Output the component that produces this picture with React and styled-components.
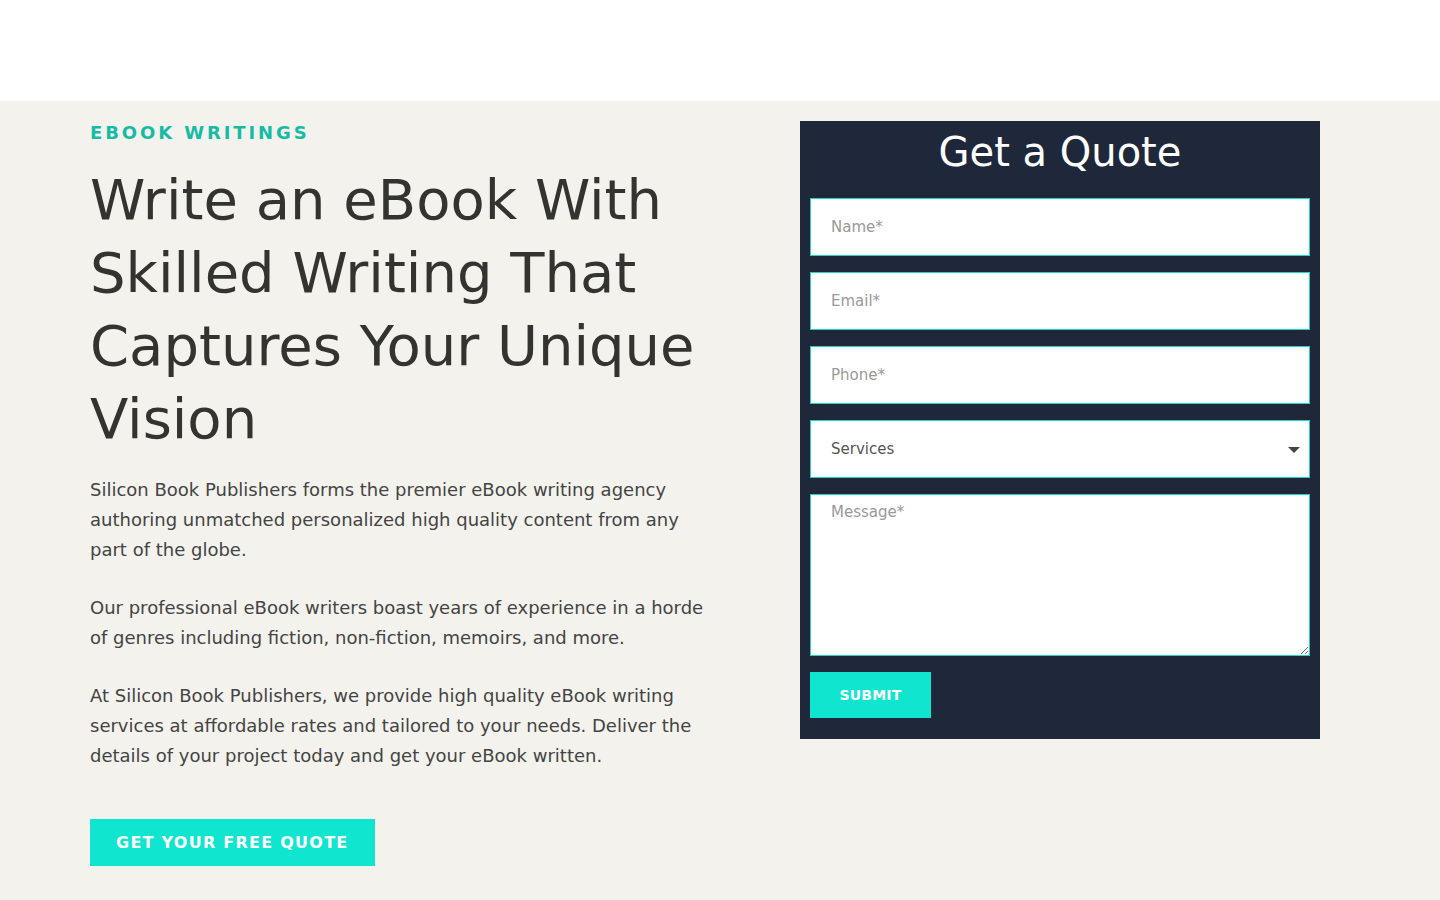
import React from "react";
import styled, { createGlobalStyle } from "styled-components";

const Global = createGlobalStyle`
  * { box-sizing: border-box; }
  html, body { margin: 0; padding: 0; }
  body { font-family: "DejaVu Sans", sans-serif; background: #ffffff; }
`;

const Header = styled.header`
  height: 101px;
  background: #ffffff;
`;

const Section = styled.section`
  background: #f3f2ed;
  padding: 20px 0 40px 90px;
  display: grid;
  grid-template-columns: 620px 520px;
  column-gap: 90px;
  align-items: start;
`;

const Left = styled.div`
  display: flex;
  flex-direction: column;
  align-items: flex-start;
  padding-top: 1px;
`;

const Eyebrow = styled.div`
  color: #17bba5;
  font-weight: 700;
  font-size: 18px;
  letter-spacing: 2.9px;
  line-height: 22px;
`;

const Title = styled.h1`
  margin: 19px 0 20px;
  font-weight: 400;
  font-size: 56px;
  line-height: 73px;
  color: #333330;
`;

const Para = styled.p`
  margin: 0 0 28px;
  font-size: 18px;
  line-height: 30px;
  color: #444444;
`;

const CtaButton = styled.button`
  margin-top: 20px;
  background: #10e5d0;
  border: none;
  color: #ffffff;
  font-family: inherit;
  font-weight: 700;
  font-size: 16px;
  letter-spacing: 1.25px;
  height: 47px;
  padding: 0 26px;
  cursor: pointer;
`;

const Panel = styled.form`
  background: #1f283b;
  padding: 2px 10px 21px;
  display: flex;
  flex-direction: column;
  gap: 16px;
`;

const PanelTitle = styled.h2`
  margin: 0 0 1px;
  text-align: center;
  color: #ffffff;
  font-weight: 400;
  font-size: 40px;
  line-height: 58px;
`;

const fieldBase = `
  width: 100%;
  background: #ffffff;
  border: 1px solid #21d6c6;
  font-family: "DejaVu Sans", sans-serif;
  font-size: 15px;
  color: #555;
  padding: 0 20px;
  outline: none;
  &::placeholder { color: #999; }
`;

const Input = styled.input`
  ${fieldBase}
  height: 58px;
`;

const SelectWrap = styled.div`
  position: relative;
`;

const Select = styled.select`
  ${fieldBase}
  height: 58px;
  appearance: none;
`;

const Caret = styled.span`
  position: absolute;
  right: 10px;
  top: 27px;
  width: 0;
  height: 0;
  border-left: 6px solid transparent;
  border-right: 6px solid transparent;
  border-top: 6px solid #444;
  pointer-events: none;
`;

const TextArea = styled.textarea`
  ${fieldBase}
  height: 162px;
  padding-top: 8px;
  resize: vertical;
  display: block;
`;

const Submit = styled.button`
  align-self: flex-start;
  background: #10e5d0;
  border: none;
  color: #ffffff;
  font-family: inherit;
  font-weight: 700;
  font-size: 14px;
  letter-spacing: 0.2px;
  height: 46px;
  width: 121px;
  cursor: pointer;
`;

export default function App() {
  return (
    <>
      <Global />
      <Header />
      <Section>
        <Left>
          <Eyebrow>EBOOK WRITINGS</Eyebrow>
          <Title>Write an eBook With Skilled Writing That Captures Your Unique Vision</Title>
          <Para>
            Silicon Book Publishers forms the premier eBook writing agency authoring unmatched
            personalized high quality content from any part of the globe.
          </Para>
          <Para>
            Our professional eBook writers boast years of experience in a horde of genres
            including fiction, non-fiction, memoirs, and more.
          </Para>
          <Para>
            At Silicon Book Publishers, we provide high quality eBook writing services at
            affordable rates and tailored to your needs. Deliver the details of your project
            today and get your eBook written.
          </Para>
          <CtaButton type="button">GET YOUR FREE QUOTE</CtaButton>
        </Left>
        <Panel onSubmit={(e) => e.preventDefault()}>
          <PanelTitle>Get a Quote</PanelTitle>
          <Input placeholder="Name*" />
          <Input placeholder="Email*" />
          <Input placeholder="Phone*" />
          <SelectWrap>
            <Select defaultValue="">
              <option value="">Services</option>
              <option>eBook Writing</option>
              <option>Editing</option>
            </Select>
            <Caret />
          </SelectWrap>
          <TextArea placeholder="Message*" />
          <Submit type="submit">SUBMIT</Submit>
        </Panel>
      </Section>
    </>
  );
}
